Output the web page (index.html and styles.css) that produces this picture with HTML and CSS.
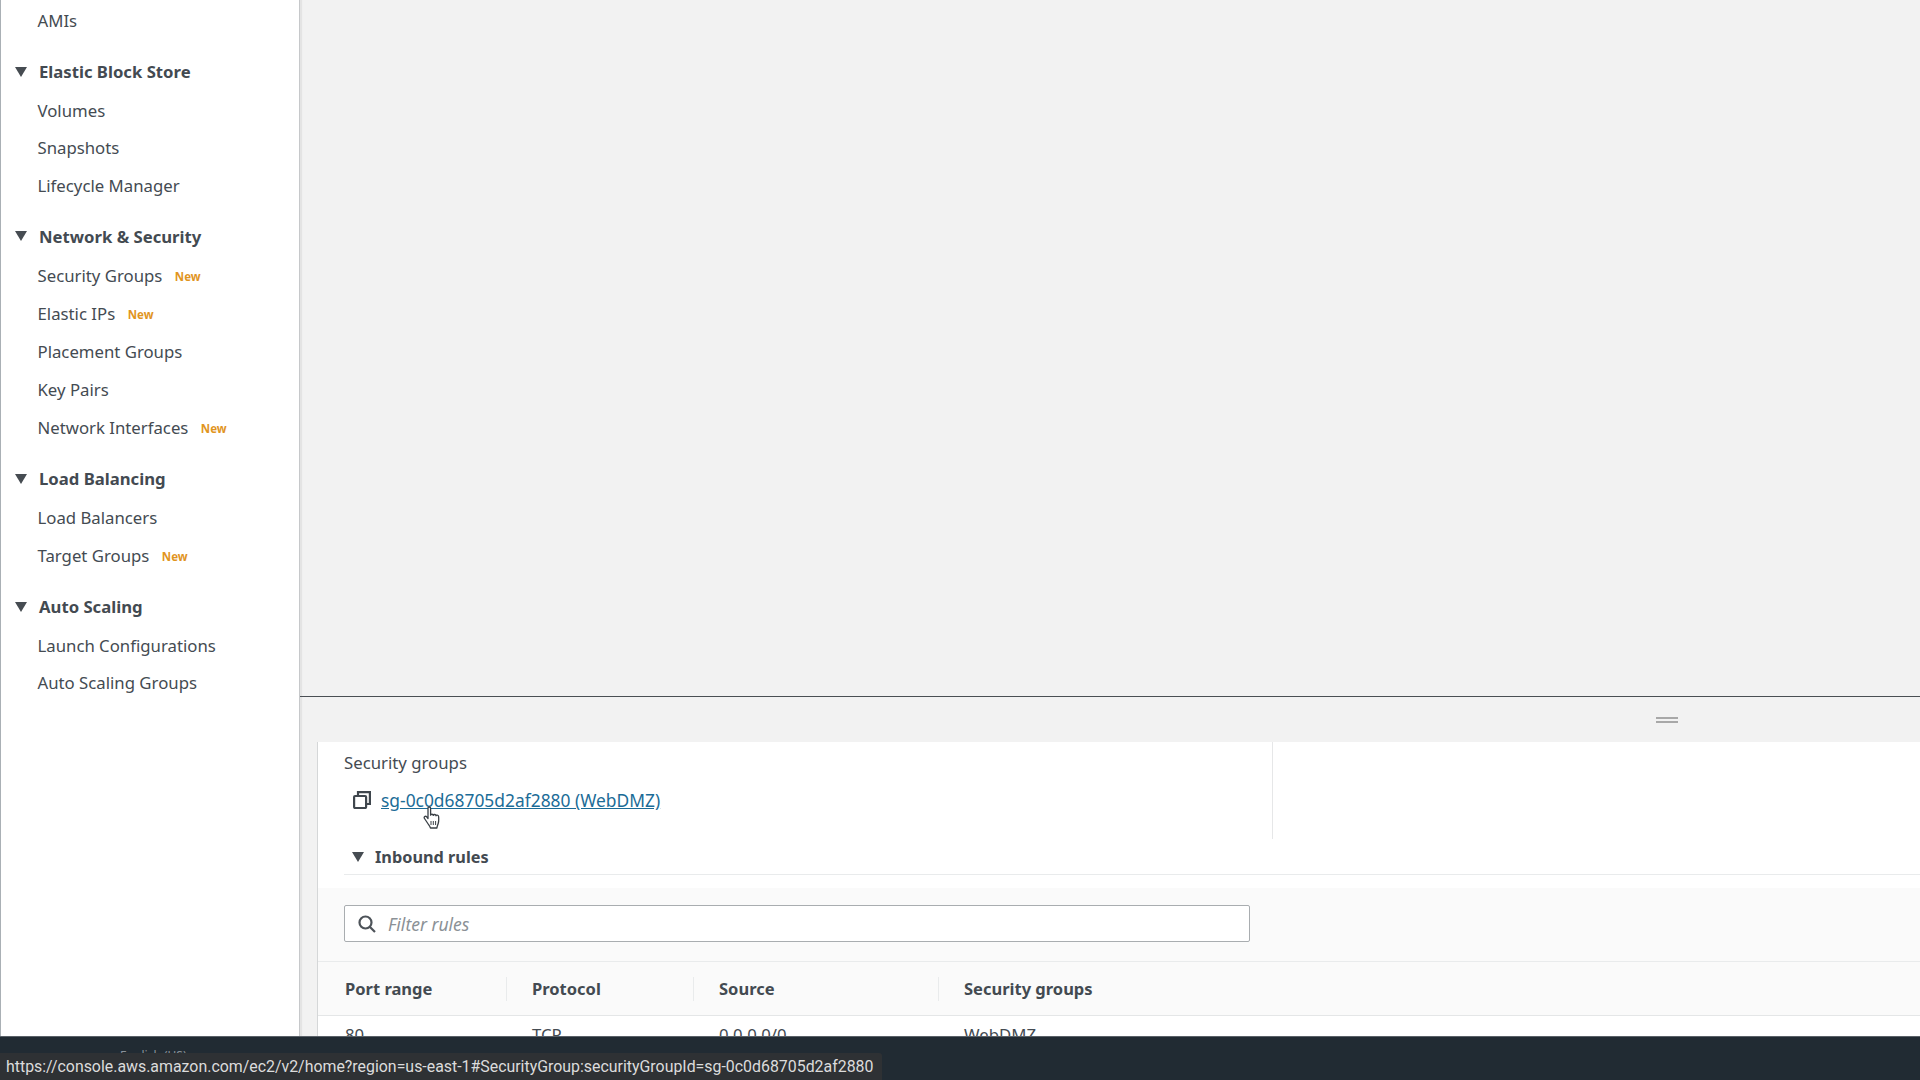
FILE: index.html
```html
<!DOCTYPE html>
<html lang="en">
<head>
<meta charset="utf-8">
<title>EC2 Security Groups</title>
<link rel="stylesheet" href="styles.css">
</head>
<body>
<div class="app">
  <div class="workspace">
    <nav class="sidebar">
      <a class="item">AMIs</a>
      <div class="group"><svg class="tri" viewBox="0 0 12 10"><path d="M0 0h12L6 10z"/></svg>Elastic Block Store</div>
      <a class="item">Volumes</a>
      <a class="item">Snapshots</a>
      <a class="item">Lifecycle Manager</a>
      <div class="group"><svg class="tri" viewBox="0 0 12 10"><path d="M0 0h12L6 10z"/></svg>Network &amp; Security</div>
      <a class="item tagged">Security Groups<span class="new">New</span></a>
      <a class="item tagged">Elastic IPs<span class="new">New</span></a>
      <a class="item">Placement Groups</a>
      <a class="item">Key Pairs</a>
      <a class="item tagged">Network Interfaces<span class="new">New</span></a>
      <div class="group"><svg class="tri" viewBox="0 0 12 10"><path d="M0 0h12L6 10z"/></svg>Load Balancing</div>
      <a class="item">Load Balancers</a>
      <a class="item tagged">Target Groups<span class="new">New</span></a>
      <div class="group"><svg class="tri" viewBox="0 0 12 10"><path d="M0 0h12L6 10z"/></svg>Auto Scaling</div>
      <a class="item">Launch Configurations</a>
      <a class="item">Auto Scaling Groups</a>
    </nav>
    <main class="main">
      <div class="list-pane"></div>
      <div class="resize-bar"><span class="handle"></span></div>
      <section class="panel">
        <div class="details">
          <div class="details-col">
            <div class="label">Security groups</div>
            <div class="link-row">
              <svg class="copy" viewBox="0 0 18 18" fill="none" stroke="#3f464d" stroke-width="2.2"><rect x="1.100" y="5" width="12" height="12" rx="1"/><path d="M5 5V1.100h11.900V13h-3.900"/></svg>
              <a class="sg-link">sg-0c0d68705d2af2880 (WebDMZ)</a>
              <svg class="cursor" viewBox="0 0 20 24"><path d="M5 2.200c0-1.600 2.600-1.600 2.600 0v7c.2-1.300 2.600-1.300 2.700.2.200-1.300 2.600-1.200 2.700.4.300-1.100 2.500-.9 2.600.7.2 2.500.3 5-.4 7-.6 1.800-1.300 3-1.300 4.500H7.500c-.5-1.800-1.700-3-3-5L1.500 12.500c-1-1.500.8-3 2.200-1.700L5 12.500z" fill="#fff" stroke="#3a4046" stroke-width="1.300" stroke-linejoin="round"/><path d="M8 15v4M10.300 15v4M12.600 15v4" stroke="#3a4046" stroke-width="1"/></svg>
            </div>
          </div>
        </div>
        <div class="rules-head"><svg class="tri" viewBox="0 0 12 10"><path d="M0 0h12L6 10z"/></svg>Inbound rules</div>
        <div class="filter-band">
          <div class="filter">
            <svg class="search" viewBox="0 0 18 18" fill="none" stroke="#4d5359" stroke-width="2.200"><circle cx="7.500" cy="7.500" r="6"/><path d="M12 12l5 5"/></svg>
            <span class="placeholder">Filter rules</span>
          </div>
        </div>
        <div class="thead">
          <div class="th c1">Port range</div>
          <div class="th c2">Protocol</div>
          <div class="th c3">Source</div>
          <div class="th c4">Security groups</div>
        </div>
        <div class="trow">
          <div class="td c1">80</div>
          <div class="td c2">TCP</div>
          <div class="td c3">0.0.0.0/0</div>
          <div class="td c4">WebDMZ</div>
        </div>
      </section>
    </main>
  </div>
  <footer class="footer"><span class="lang">English (US)</span></footer>
</div>
<div class="status">https://console.aws.amazon.com/ec2/v2/home?region=us-east-1#SecurityGroup:securityGroupId=sg-0c0d68705d2af2880</div>
</body>
</html>
```
FILE: styles.css
```css
* { box-sizing: border-box; }
html, body { margin: 0; height: 100%; overflow: hidden; }
body { font-family: "Noto Sans", "Open Sans", sans-serif; font-size: 16.75px; color: #444b52; background: #f2f2f2; }
.app { height: 1080px; display: flex; flex-direction: column; }
.workspace { flex: 1; min-height: 0; display: flex; }
.sidebar { width: 300px; flex: none; background: #fff; border-left: 1px solid #aab0b5; border-right: 1px solid #c6c8ca; box-shadow: 2px 0 1px #e4e4e4; padding-top: 2px; display: flex; flex-direction: column; }
.item { display: flex; align-items: center; height: 37.5px; padding-left: 36.500px; white-space: nowrap; }
.tagged { height: 38.5px; }
.new { margin-left: 12.5px; font-size: 11.5px; font-weight: 700; color: #e1951f; position: relative; top: 1px; }
.group { display: flex; align-items: center; height: 38px; margin-top: 13px; margin-bottom: 1px; font-size: 16.7px; font-weight: 700; color: #434a51; white-space: nowrap; }
.sidebar .tri { margin: 0 12px 0 14px; }
.tri { width: 12px; height: 10px; fill: #464c52; flex: none; }
.main { flex: 1; min-width: 0; display: flex; flex-direction: column; }
.list-pane { height: 697px; flex: none; border-bottom: 1px solid #4a4f54; }
.resize-bar { height: 45px; flex: none; display: flex; justify-content: flex-end; padding: 20px 242px 0 0; }
.handle { width: 22px; height: 6px; border-top: 2px solid #a8a8a8; border-bottom: 2px solid #a8a8a8; }
.panel { flex: 1; min-height: 0; margin-left: 17px; background: #fff; border-left: 1px solid #d5d7d8; overflow: hidden; }
.details { height: 97px; padding-left: 26px; }
.details-col { width: 929px; height: 97px; border-right: 1px solid #e6e7e8; padding-top: 9px; }
.label { line-height: 24px; }
.link-row { position: relative; display: flex; align-items: center; height: 24px; margin-top: 13px; padding-left: 9px; }
.copy { width: 18px; height: 18px; flex: none; margin-right: 10px; }
.sg-link { font-size: 17.4px; color: #1b6c97; text-decoration: underline; white-space: nowrap; }
.cursor { position: absolute; left: 79px; top: 18px; width: 20px; height: 24px; }
.rules-head { display: flex; align-items: center; height: 36px; margin-left: 26px; border-bottom: 1px solid #e9ebec; font-size: 16.3px; font-weight: 700; color: #434a51; }
.rules-head .tri { margin: 0 11px 0 8px; }
.filter-band { margin-top: 13px; height: 74px; padding: 17px 0 0 26px; background: #fafafa; border-bottom: 1px solid #e9ebec; }
.filter { width: 906px; height: 37px; display: flex; align-items: center; padding-left: 13px; background: #fff; border: 1px solid #a9adb0; border-radius: 2px; }
.search { width: 18px; height: 18px; flex: none; margin-right: 12px; }
.placeholder { font-size: 17.5px; font-style: italic; color: #8b9196; }
.thead { display: flex; align-items: center; height: 54px; background: #fafafa; border-bottom: 1px solid #e4e6e7; }
.trow { display: flex; padding-top: 7px; }
.th { font-size: 16.5px; font-weight: 700; color: #434a51; border-right: 1px solid #e9ebec; line-height: 24px; white-space: nowrap; }
.td { line-height: 24px; white-space: nowrap; }
.c1 { width: 189px; padding-left: 27px; }
.c2 { width: 187px; padding-left: 25px; }
.c3 { width: 245px; padding-left: 25px; }
.c4 { padding-left: 25px; border-right: 0; }
.footer { height: 44px; flex: none; background: #212b33; border-top: 1px solid #5a6168; position: relative; z-index: 1; overflow: hidden; }
.lang { position: absolute; left: 120px; top: 10px; font-size: 12px; color: #8a9198; }
.status { position: absolute; z-index: 2; left: 0; bottom: 0; width: 882px; height: 27px; padding: 4px 0 0 6px; background: #2e3134; border-radius: 0 3px 0 0; color: #dcdcdc; font-family: Roboto, "Liberation Sans", sans-serif; font-size: 15.9px; line-height: 20px; white-space: nowrap; overflow: hidden; }
```
